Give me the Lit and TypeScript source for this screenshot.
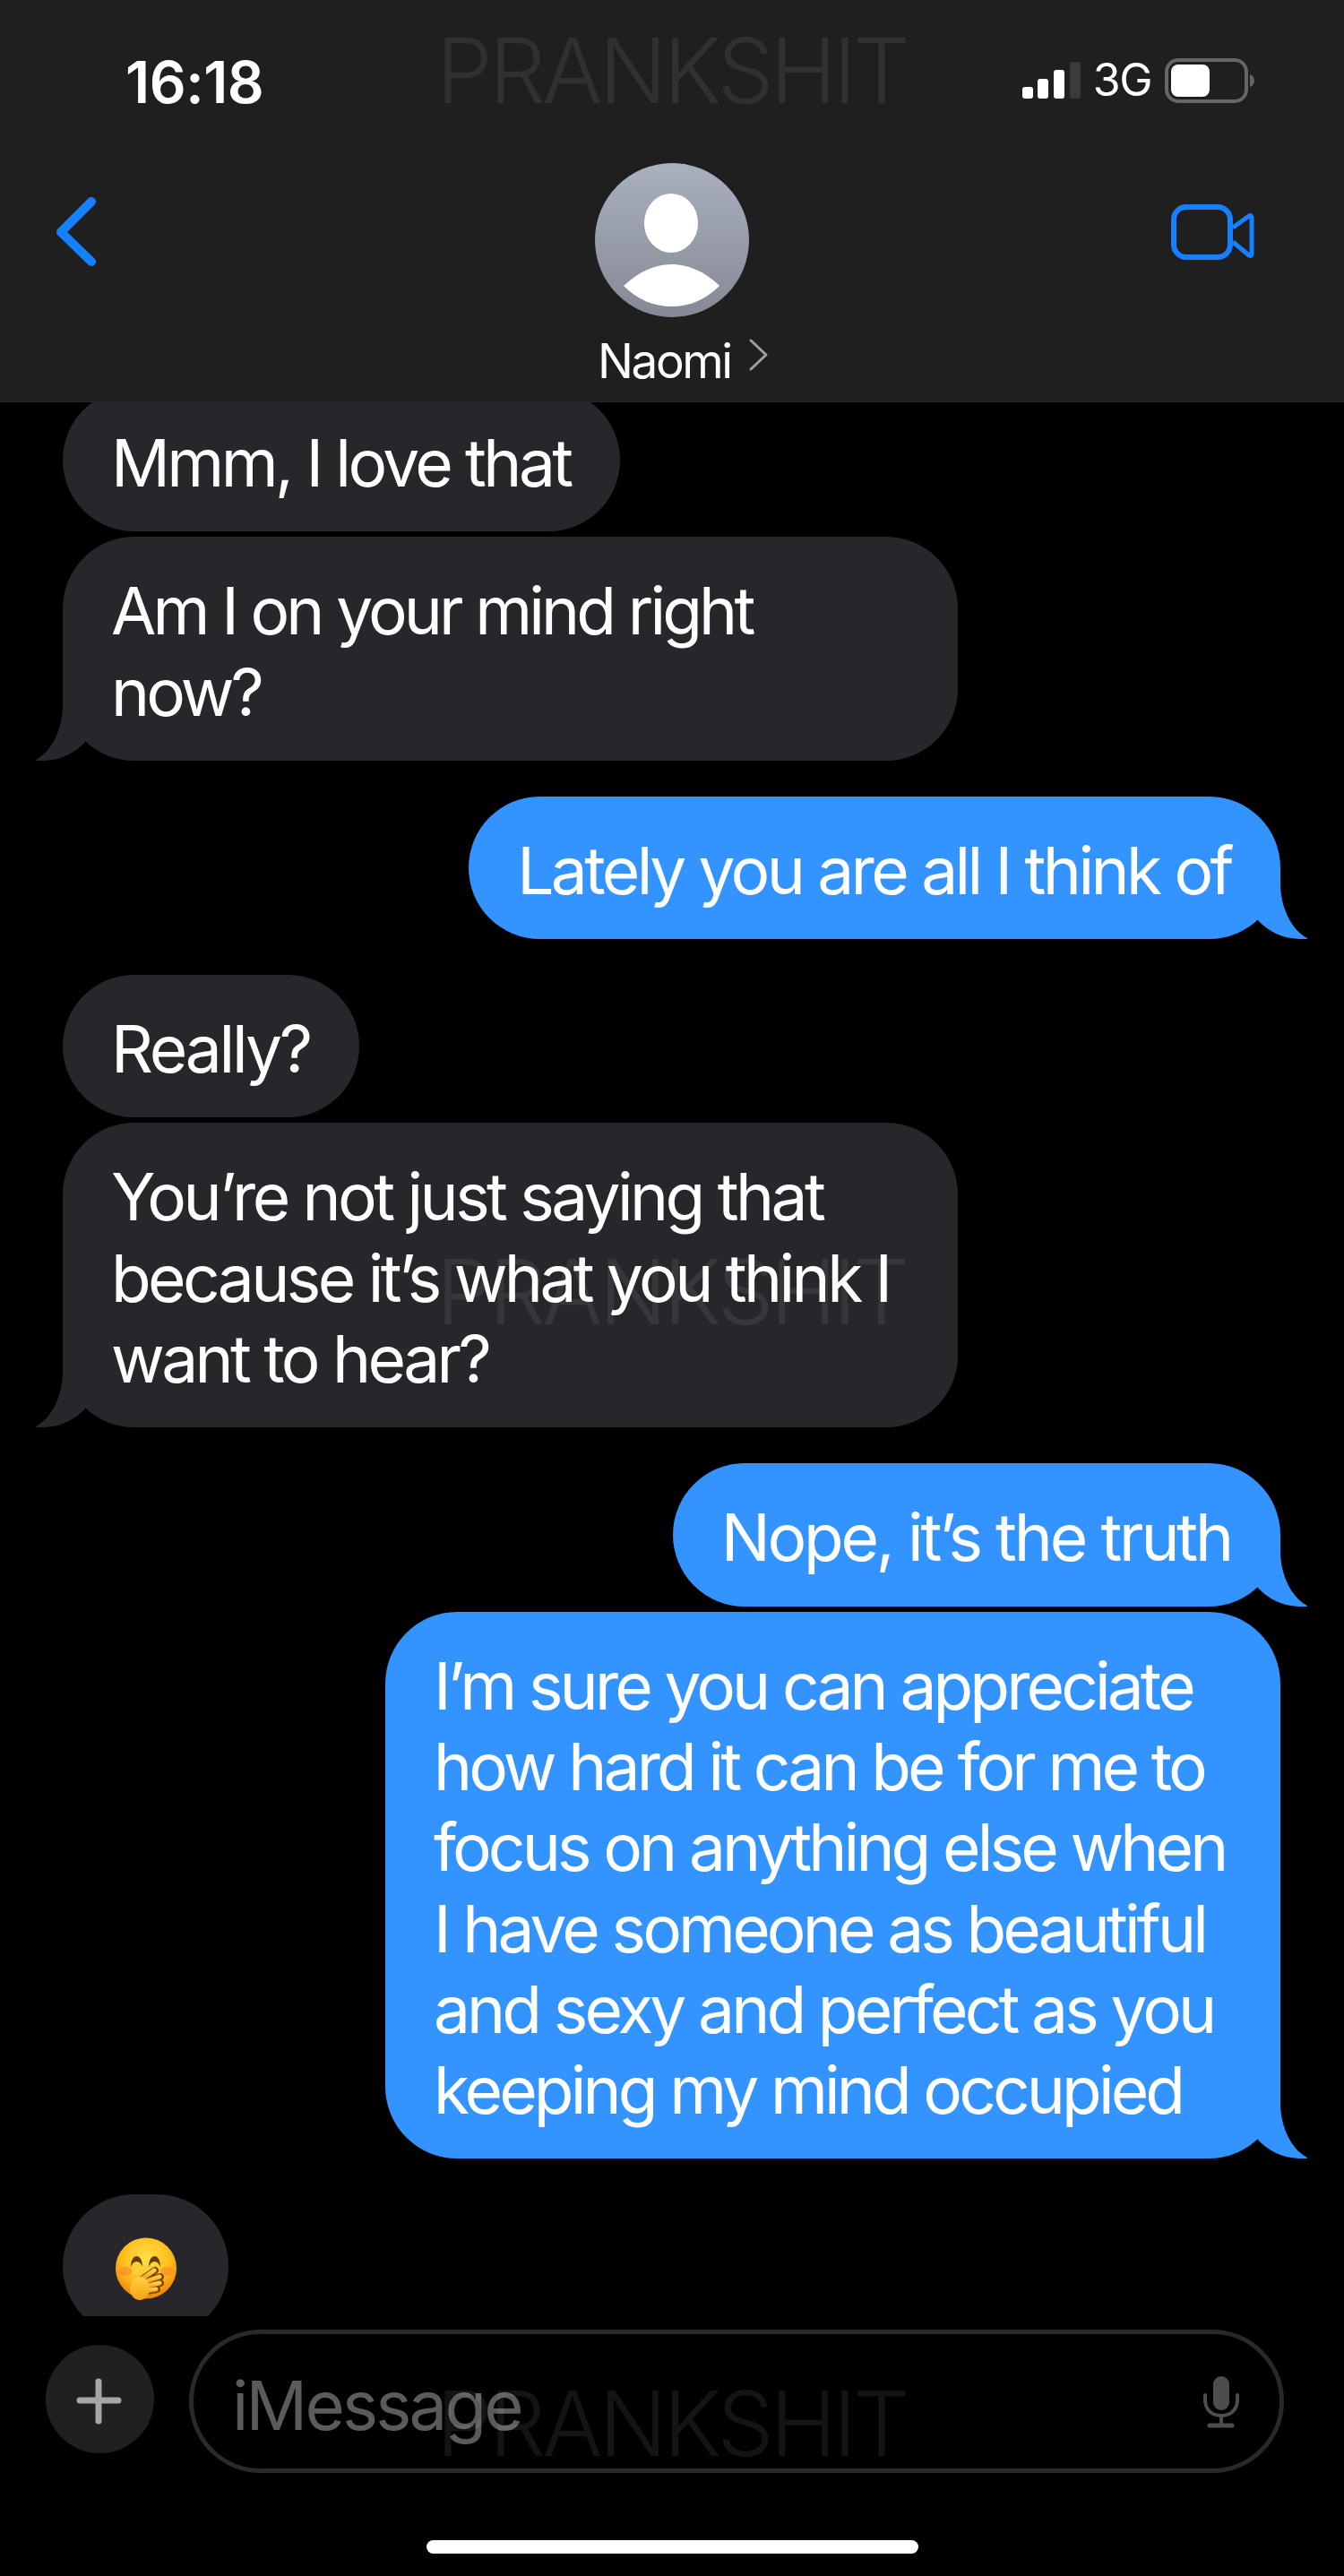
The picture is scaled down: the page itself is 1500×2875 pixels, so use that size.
import { LitElement, html, css, nothing } from 'lit';
import { customElement } from 'lit/decorators.js';

interface Message {
  side: 'in' | 'out';
  lines: string[];
  wide?: boolean;
  tail?: boolean;
  near?: boolean; // follows the previous bubble closely
  tracking?: 'loose' | 'tight';
}

const MESSAGES: Message[] = [
  { side: 'in', lines: ['Mmm, I love that'] },
  {
    side: 'in',
    lines: ['Am I on your mind right', 'now?'],
    wide: true,
    tail: true,
    near: true,
    tracking: 'tight',
  },
  { side: 'out', lines: ['Lately you are all I think of'], tail: true },
  { side: 'in', lines: ['Really?'], tracking: 'loose' },
  {
    side: 'in',
    lines: ['You’re not just saying that', 'because it’s what you think I', 'want to hear?'],
    wide: true,
    tail: true,
    near: true,
  },
  { side: 'out', lines: ['Nope, it’s the truth'], tail: true, tracking: 'loose' },
  {
    side: 'out',
    lines: [
      'I’m sure you can appreciate',
      'how hard it can be for me to',
      'focus on anything else when',
      'I have someone as beautiful',
      'and sexy and perfect as you',
      'keeping my mind occupied',
    ],
    wide: true,
    tail: true,
    near: true,
    tracking: 'tight',
  },
];

const tail = html`<svg class="tail" viewBox="-30 -80 110 80">
  <path d="M0 -80 L0 -62 C0 -36 -12 -10 -30 -1 C-30 -.5 -30 0 -29 0 C-6 1 12 -6 27 -23 L50 -50 Z" />
</svg>`;

const faceEmoji = html`<svg class="emoji" viewBox="0 0 70 70">
  <defs>
    <radialGradient id="face" cx="50%" cy="35%" r="65%">
      <stop offset="0" stop-color="#ffe04a" />
      <stop offset=".6" stop-color="#ffbe1c" />
      <stop offset="1" stop-color="#f08206" />
    </radialGradient>
    <linearGradient id="palm" x1="0" y1="0" x2="0" y2="1">
      <stop offset="0" stop-color="#ffcf45" />
      <stop offset="1" stop-color="#f8a215" />
    </linearGradient>
  </defs>
  <circle cx="35" cy="34.5" r="34" fill="url(#face)" />
  <ellipse cx="12" cy="38" rx="7" ry="5" fill="#ff7a2a" opacity=".5" />
  <ellipse cx="58" cy="38" rx="7" ry="5" fill="#ff7a2a" opacity=".5" />
  <path d="M18 33 C18 17 31 17 31 33 C28 25 21 25 18 33 Z" fill="#6b3c06" />
  <path d="M38 33 C38 17 51 17 51 33 C48 25 41 25 38 33 Z" fill="#6b3c06" />
  <g fill="none" stroke="#7a4204" stroke-linecap="round" stroke-width="8">
    <path d="M32 46 L45 37" />
    <path d="M34 50 L51 44" />
    <path d="M35 55 L51 51" />
    <path d="M35 60 L47 58" />
  </g>
  <g fill="none" stroke="url(#palm)" stroke-linecap="round" stroke-width="5">
    <path d="M25 50 L23 39" stroke-width="6" />
    <path d="M31 46 L44 37" />
    <path d="M33 50 L50 44" />
    <path d="M34 55 L50 51" />
    <path d="M34 60 L46 58" />
  </g>
  <ellipse cx="28" cy="57" rx="11" ry="13" fill="url(#palm)" />
</svg>`;

@customElement('app-root')
export class AppRoot extends LitElement {
  static styles = css`
    :host {
      display: block;
      position: relative;
      width: 1500px;
      height: 2875px;
      overflow: hidden;
      background: #000;
      color: #fff;
      font-family: Inter, 'Liberation Sans', sans-serif;
    }

    .header {
      height: 449px;
      box-sizing: border-box;
      background: #1f1f1f;
      border-bottom: 1px solid #262626;
    }

    .status {
      height: 182px;
      display: flex;
      align-items: center;
      padding-left: 140px;
      padding-right: 100px;
    }

    .time {
      font-size: 64px;
      font-weight: 600;
      letter-spacing: -0.4px;
      margin-right: auto;
    }

    .signal {
      width: 65px;
      height: 41px;
      margin-right: 14px;
      margin-top: -4px;
    }

    .net {
      font-size: 50px;
      letter-spacing: -1.5px;
      margin-right: 15px;
      margin-top: -4px;
    }

    .battery {
      width: 100px;
      height: 50px;
      margin-top: -2px;
    }

    .nav {
      display: grid;
      grid-template-columns: 1fr auto 1fr;
    }

    .back {
      width: 50px;
      height: 80px;
      margin: 36px 0 0 60px;
    }

    .contact {
      width: 172px;
    }

    .avatar {
      display: block;
      width: 172px;
      height: 172px;
    }

    .name {
      display: flex;
      align-items: center;
      white-space: nowrap;
      margin: 19px 0 0 3px;
      font-size: 53px;
      line-height: 60px;
      letter-spacing: -2.4px;
    }

    .name svg {
      width: 24px;
      height: 40px;
      margin: -12px 0 0 19px;
      flex: none;
    }

    .video {
      justify-self: end;
      width: 100px;
      height: 70px;
      margin: 41px 100px 0 0;
    }

    .thread {
      height: 2136px;
      overflow: hidden;
      padding: 0 71px 0 70px;
      display: flex;
      flex-direction: column;
    }

    .bubble {
      flex: none;
      position: relative;
      box-sizing: border-box;
      width: fit-content;
      padding: 38px 55px 31px 54px;
      margin-top: 40px;
      border-radius: 80px;
      font-size: 73px;
      line-height: 90.3px;
      letter-spacing: -3.6px;
      white-space: nowrap;
    }

    .bubble.loose {
      letter-spacing: -3.2px;
    }

    .bubble.tight {
      letter-spacing: -3.9px;
    }

    .bubble:first-child {
      margin-top: -15px;
    }

    .bubble.near {
      margin-top: 6px;
    }

    .bubble.wide {
      width: 999px;
    }

    .bubble.in {
      background: #27272b;
      fill: #27272b;
      align-self: flex-start;
    }

    .bubble.out {
      background: #3393ff;
      fill: #3393ff;
      align-self: flex-end;
    }

    .tail {
      position: absolute;
      bottom: 0;
      width: 110px;
      height: 80px;
    }

    .in .tail {
      left: -30px;
    }

    .out .tail {
      right: -30px;
      transform: scaleX(-1);
    }

    .bubble.emoji-only {
      width: 185px;
      height: 160px;
      padding: 48px 0 0 58px;
    }

    .emoji {
      display: block;
      width: 70px;
      height: 70px;
    }

    .composer {
      display: flex;
      align-items: flex-start;
      padding: 15px 67px 0 51px;
    }

    .plus {
      flex: none;
      width: 121px;
      height: 121px;
      margin: 17px 39px 0 0;
    }

    .field {
      flex: 1;
      height: 160px;
      box-sizing: border-box;
      border: 5px solid #29292b;
      border-radius: 80px;
      display: flex;
      align-items: center;
      padding: 0 45px 0 43px;
      font-size: 76px;
      letter-spacing: -2.8px;
      color: #5b5b5e;
    }

    .field span {
      margin-right: auto;
      margin-top: 8px;
    }

    .mic {
      width: 40px;
      height: 60px;
      margin-top: 4px;
    }

    .home {
      width: 549px;
      height: 15px;
      margin: 75px auto 0;
      border-radius: 8px;
      background: #fff;
    }

    .mark {
      position: absolute;
      left: 487px;
      font-size: 100px;
      line-height: 100px;
      font-weight: 300;
      letter-spacing: -4px;
      color: rgba(255, 255, 255, 0.08);
      pointer-events: none;
    }

    .m1 { top: 29px; }
    .m2 { top: 1392px; }
    .m3 { top: 2655px; }
  `;

  private renderBubble(m: Message) {
    const cls = ['bubble', m.side, m.wide ? 'wide' : '', m.near ? 'near' : '', m.tracking ?? ''].join(' ');
    return html`<div class=${cls}>
      ${m.tail ? tail : nothing}${m.lines.map((l, i) => html`${i ? html`<br />` : nothing}${l}`)}
    </div>`;
  }

  render() {
    return html`
      <div class="header">
        <div class="status">
          <span class="time">16:18</span>
          <svg class="signal" viewBox="0 0 65 41">
            <rect x="0" y="28" width="12" height="13" rx="3" fill="#fff" />
            <rect x="17" y="19" width="12" height="22" rx="3" fill="#fff" />
            <rect x="35" y="9" width="12" height="32" rx="3" fill="#fff" />
            <rect x="53" y="0" width="12" height="41" rx="3" fill="#3a3a3a" />
          </svg>
          <span class="net">3G</span>
          <svg class="battery" viewBox="0 0 100 50">
            <rect x="2" y="2" width="89" height="46" rx="13" fill="none" stroke="#666" stroke-width="4" />
            <rect x="7" y="7" width="43" height="36" rx="8" fill="#fff" />
            <path d="M95 18 C98 19 100 22 100 25 C100 28 98 31 95 32 Z" fill="#666" />
          </svg>
        </div>
        <div class="nav">
          <svg class="back" viewBox="0 0 50 80">
            <path d="M42 7 L8 41 L42 74" fill="none" stroke="#1581ff" stroke-width="10" stroke-linecap="round" stroke-linejoin="round" />
          </svg>
          <div class="contact">
            <svg class="avatar" viewBox="0 0 172 172">
              <defs>
                <linearGradient id="ava" x1="0" y1="0" x2="0" y2="1">
                  <stop offset="0" stop-color="#aab0be" />
                  <stop offset="1" stop-color="#858995" />
                </linearGradient>
              </defs>
              <circle cx="86" cy="86" r="86" fill="url(#ava)" />
              <ellipse cx="85" cy="67" rx="30" ry="33" fill="#fff" />
              <path d="M32 137 C48 122 66 113 85 113 C104 113 124 122 139 137 C124 152 106 160 86 160 C65 160 47 152 32 137 Z" fill="#fff" />
            </svg>
            <div class="name">
              Naomi
              <svg viewBox="0 0 24 40">
                <path d="M3 3 L20 19 L3 35" fill="none" stroke="#a0a0a0" stroke-width="3" stroke-linecap="round" stroke-linejoin="round" />
              </svg>
            </div>
          </div>
          <svg class="video" viewBox="0 0 100 70">
            <rect x="10" y="8" width="63" height="56" rx="14" fill="none" stroke="#1581ff" stroke-width="6" />
            <path d="M76 31 L94 18 C96 17 97 18 97 20 L97 60 C97 62 96 63 94 62 L76 47" fill="none" stroke="#1581ff" stroke-width="5" stroke-linejoin="round" />
          </svg>
        </div>
      </div>
      <div class="thread">
        ${MESSAGES.map((m) => this.renderBubble(m))}
        <div class="bubble in emoji-only">${faceEmoji}</div>
      </div>
      <div class="composer">
        <svg class="plus" viewBox="0 0 121 121">
          <circle cx="60.5" cy="60.5" r="60.5" fill="#221f20" />
          <path d="M59 41 V85 M38 62 H81" stroke="#a6a6a6" stroke-width="7" stroke-linecap="round" />
        </svg>
        <div class="field">
          <span>iMessage</span>
          <svg class="mic" viewBox="0 0 40 60">
            <rect x="11" y="0" width="18" height="38" rx="9" fill="#4d4d4d" />
            <path d="M2 21 V26 C2 37 9 44 20 44 C31 44 38 37 38 26 V21" fill="none" stroke="#4d4d4d" stroke-width="4" stroke-linecap="round" />
            <path d="M20 44 V54" fill="none" stroke="#4d4d4d" stroke-width="4" />
            <path d="M7 55 H32" stroke="#4d4d4d" stroke-width="5" stroke-linecap="round" />
          </svg>
        </div>
      </div>
      <div class="home"></div>
      <div class="mark m1">PRANKSHIT</div>
      <div class="mark m2">PRANKSHIT</div>
      <div class="mark m3">PRANKSHIT</div>
    `;
  }
}
